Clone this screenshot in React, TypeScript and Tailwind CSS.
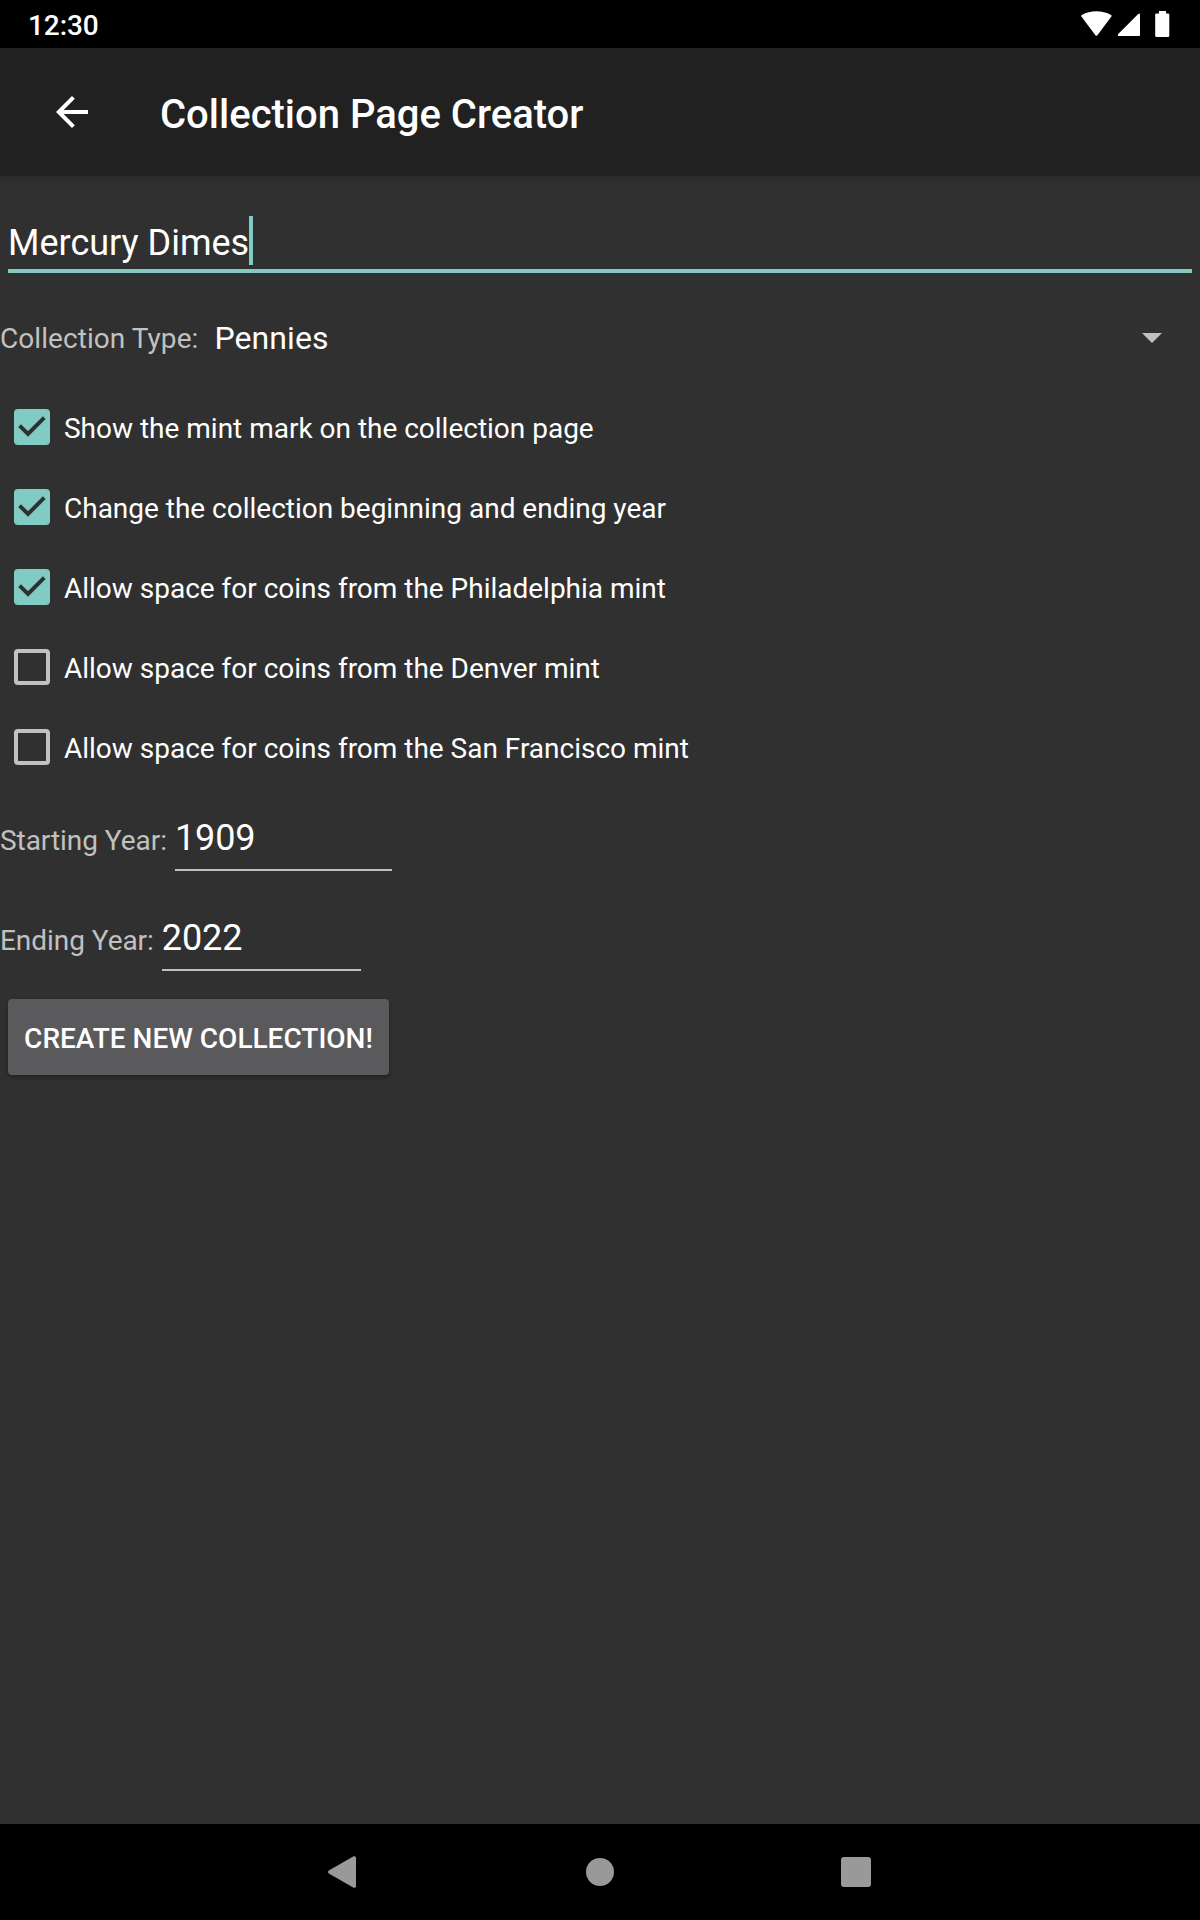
import React from "react";

const options = [
  { label: "Show the mint mark on the collection page", checked: true },
  { label: "Change the collection beginning and ending year", checked: true },
  { label: "Allow space for coins from the Philadelphia mint", checked: true },
  { label: "Allow space for coins from the Denver mint", checked: false },
  { label: "Allow space for coins from the San Francisco mint", checked: false },
];

function StatusBar() {
  return (
    <div className="flex h-12 shrink-0 items-center justify-between bg-black pr-[30px] pl-7">
      <span className="pt-[3px] text-[28px] leading-[48px] font-medium tracking-[-0.1px]">12:30</span>
      <div className="flex h-12 items-start">
        <svg className="mt-[11px] h-[26px] w-[32px]" viewBox="-0.4 0 32 26" fill="#fff">
          <path d="M1 5.5Q0.3 4.6 1.3 4C10 -1 22 -1 30.7 4Q31.7 4.6 31 5.5L17 24.2Q16 25.4 15 24.2Z" />
        </svg>
        <svg className="mt-[13px] ml-[5px] h-[23px] w-[23px]" viewBox="0 0 23 23" fill="#fff">
          <path d="M23 1.5V22a1 1 0 0 1-1 1H1.7Q.2 22.6 1 21.2L21.2 1Q22.8 0 23 1.5Z" />
        </svg>
        <svg className="mt-[11px] ml-[15px] h-[26px] w-[15px]" viewBox="0 0 15 26" fill="#fff">
          <path d="M4 0h7v2.5h2A1.3 1.3 0 0 1 14.3 3.8V24.7A1.3 1.3 0 0 1 13 26H1.5A1.3 1.3 0 0 1 .2 24.7V3.8A1.3 1.3 0 0 1 1.5 2.5H4Z" />
        </svg>
      </div>
    </div>
  );
}

function AppBar() {
  return (
    <header className="z-10 flex h-32 shrink-0 items-center bg-[#212121] pl-12 shadow-[0_1px_6px_rgba(0,0,0,0.22)]">
      <svg className="h-12 w-12" viewBox="0 0 24 24" fill="#fff">
        <path d="M20 11H7.83l5.59-5.59L12 4l-8 8 8 8 1.41-1.41L7.83 13H20v-2z" />
      </svg>
      <h1 className="ml-16 pt-[5px] text-[40px] leading-[48px] font-medium">Collection Page Creator</h1>
    </header>
  );
}

function Checkbox({ label, checked }: { label: string; checked: boolean }) {
  return (
    <div className="flex h-20 items-center pl-[14px]">
      {checked ? (
        <svg className="h-9 w-9" viewBox="0 0 36 36">
          <rect width="36" height="36" rx="4" fill="#80cbc4" />
          <path d="M5.6 16.6L14 25L30.3 8.7" fill="none" stroke="#303030" strokeWidth="4" />
        </svg>
      ) : (
        <div className="h-9 w-9 rounded-[4px] border-4 border-[#c1c1c1]" />
      )}
      <span className="ml-[14px] pt-[3px] text-[28px] leading-10 tracking-[-0.01px]">{label}</span>
    </div>
  );
}

function YearField({ label, value, width }: { label: string; value: string; width: string }) {
  return (
    <div className="flex h-[100px] items-start">
      <span className="pt-[34px] text-[28px] leading-10 tracking-[-0.05px] text-[#c1c1c1]">{label}</span>
      <div className={"ml-2 h-[84px] border-b-2 border-[#c1c1c1] pt-[29px] text-[36px] leading-[44px] tracking-[-0.1px] " + width}>
        {value}
      </div>
    </div>
  );
}

function NavBar() {
  return (
    <nav className="flex h-24 shrink-0 items-center bg-black pl-[328px]">
      <svg className="h-8 w-7" viewBox="0 0 28 32" fill="#999">
        <path d="M.8 14.6L25.6.3Q27.8-.3 28 1.8V30.2Q27.8 32.3 25.6 31.7L.8 17.4Q-.6 16 .8 14.6Z" />
      </svg>
      <div className="ml-[230px] h-7 w-7 rounded-full bg-[#999]" />
      <div className="ml-[227px] h-[30px] w-[30px] rounded-[3px] bg-[#999]" />
    </nav>
  );
}

export default function App() {
  return (
    <div className="flex h-[1920px] w-[1200px] flex-col overflow-hidden bg-[#303030] font-['Roboto',sans-serif] text-white">
      <StatusBar />
      <AppBar />
      <main className="flex flex-1 flex-col">
        <div className="mx-2 mt-10 flex h-[57px] border-b-4 border-[#80cbc4]">
          <span className="pt-[5px] text-[36px] leading-[44px]">Mercury Dimes</span>
          <span className="h-[49px] w-1 bg-[#80cbc4]" />
        </div>
        <div className="mt-[25px] flex h-20 items-center">
          <span className="pt-[1px] text-[28px] leading-10 tracking-[0.06px] text-[#c1c1c1]">Collection Type:</span>
          <span className="ml-4 text-[32px] leading-10 tracking-[0.1px]">Pennies</span>
          <svg className="mr-[38px] ml-auto h-[10px] w-5" viewBox="0 0 20 10" fill="#c1c1c1">
            <path d="M0 0H20L10 10Z" />
          </svg>
        </div>
        <div className="mt-[9px] flex flex-col">
          {options.map((o) => (
            <Checkbox key={o.label} label={o.label} checked={o.checked} />
          ))}
        </div>
        <YearField label="Starting Year:" value="1909" width="w-[217px]" />
        <YearField label="Ending Year:" value="2022" width="w-[199px]" />
        <button className="mt-3 ml-2 h-[76px] w-[381px] rounded-[4px] bg-[#5a595b] pt-[3px] text-[28px] leading-10 font-medium whitespace-nowrap shadow-[0_2px_4px_rgba(0,0,0,0.35)]">
          CREATE NEW COLLECTION!
        </button>
      </main>
      <NavBar />
    </div>
  );
}
